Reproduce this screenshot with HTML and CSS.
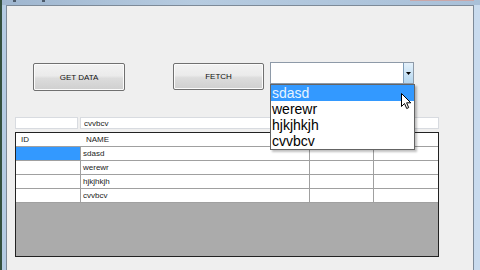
FILE: index.html
```html
<!DOCTYPE html>
<html lang="en">
<head>
    <meta charset="UTF-8">
    <title>Form1</title>
    <link rel="stylesheet" href="styles.css">
</head>
<body>
    <div class="window">
        <div class="titlebar">
            <span class="tb-mark"></span>
            <span class="tb-mark tb-mark2"></span>
            <span class="tb-close"></span>
        </div>
        <div class="frame">
            <div class="client">
                <div class="toolbar">
                    <button class="btn btn-get">GET DATA</button>
                    <button class="btn btn-fetch">FETCH</button>
                    <div class="combo">
                        <div class="combo-box">
                            <span class="combo-text"></span>
                            <span class="combo-arrow">
                                <svg width="5" height="3" viewBox="0 0 5 3"><path d="M0 0h5L2.5 3z" fill="#000"/></svg>
                            </span>
                        </div>
                        <ul class="combo-list">
                            <li class="selected">sdasd</li>
                            <li>werewr</li>
                            <li>hjkjhkjh</li>
                            <li>cvvbcv</li>
                        </ul>
                        <svg class="cursor" width="11" height="17" viewBox="0 0 11 17">
                            <path d="M0.5 0.5v13l3-3 2.2 5 2-0.9-2.1-4.8h4.2z" fill="#fff" stroke="#000" stroke-width="1" stroke-linejoin="round"/>
                        </svg>
                    </div>
                </div>
                <div class="inputs">
                    <input class="txt txt-id" type="text" value="">
                    <input class="txt txt-name" type="text" value="cvvbcv">
                </div>
                <div class="grid">
                    <div class="grid-row grid-head">
                        <span class="cell c-id">ID</span>
                        <span class="cell c-name">NAME</span>
                        <span class="cell c-x"></span>
                        <span class="cell c-y"></span>
                    </div>
                    <div class="grid-row">
                        <span class="cell c-id current"></span>
                        <span class="cell c-name">sdasd</span>
                        <span class="cell c-x"></span>
                        <span class="cell c-y"></span>
                    </div>
                    <div class="grid-row">
                        <span class="cell c-id"></span>
                        <span class="cell c-name">werewr</span>
                        <span class="cell c-x"></span>
                        <span class="cell c-y"></span>
                    </div>
                    <div class="grid-row">
                        <span class="cell c-id"></span>
                        <span class="cell c-name">hjkjhkjh</span>
                        <span class="cell c-x"></span>
                        <span class="cell c-y"></span>
                    </div>
                    <div class="grid-row">
                        <span class="cell c-id"></span>
                        <span class="cell c-name">cvvbcv</span>
                        <span class="cell c-x"></span>
                        <span class="cell c-y"></span>
                    </div>
                </div>
            </div>
        </div>
    </div>
</body>
</html>
```

FILE: styles.css
```css
body {
    margin: 0;
    width: 480px;
    height: 270px;
    overflow: hidden;
    font-family: "Liberation Sans", Arial, sans-serif;
}

.window {
    display: flex;
    flex-direction: column;
    width: 480px;
    height: 270px;
    border-left: 2px solid #34503f;
    box-sizing: border-box;
}

.titlebar {
    position: relative;
    height: 5px;
    background: linear-gradient(to right, #9fb6cf, #b6cbe0 40%, #a9c0d8);
}

.tb-mark {
    position: absolute;
    left: 11px;
    top: 0;
    width: 3px;
    height: 2px;
    background: #4d5b6b;
}

.tb-mark2 {
    left: 40px;
}

.tb-close {
    position: absolute;
    right: 6px;
    top: 0;
    width: 64px;
    height: 1px;
    background: #c9a7a9;
}

.frame {
    flex: 1;
    display: flex;
    padding: 0 6px 0 4px;
    background: linear-gradient(to right, #b4cbe3, #c9dbee);
}

.client {
    flex: 1;
    display: flex;
    flex-direction: column;
    padding: 0 0 0 8px;
    background: #efefef;
    border: 1px solid #7d8a98;
    border-bottom: 0;
}

.toolbar {
    display: flex;
    align-items: flex-start;
    margin-top: 56px;
    padding-left: 18px;
    height: 29px;
}

.btn {
    margin: 1px 0 0 0;
    padding: 0;
    font-family: "Liberation Sans", Arial, sans-serif;
    font-size: 8px;
    color: #111;
    border: 1px solid #707070;
    border-radius: 2px;
    background: linear-gradient(to bottom, #f2f2f2 0%, #ebebeb 45%, #dcdcdc 55%, #cfcfcf 100%);
    box-shadow: inset 0 0 0 1px #fbfbfb;
}

.btn-get {
    width: 92px;
    height: 28px;
}

.btn-fetch {
    width: 91px;
    height: 27px;
    margin-left: 48px;
}

.combo {
    position: relative;
    margin-left: 6px;
    width: 144px;
}

.combo-box {
    display: flex;
    height: 22px;
    box-sizing: border-box;
    border: 1px solid #8e9aa8;
    background: #fff;
}

.combo-text {
    flex: 1;
}

.combo-arrow {
    display: flex;
    align-items: center;
    justify-content: center;
    width: 9px;
    border-left: 1px solid #7f9db9;
    background: linear-gradient(to bottom, #e4f1fb, #b4d6ef);
}

.combo-list {
    position: absolute;
    z-index: 5;
    left: 0;
    top: 22px;
    width: 145px;
    margin: 0;
    padding: 0;
    list-style: none;
    background: #fff;
    border: 1px solid #646464;
    box-sizing: border-box;
    box-shadow: 2px 2px 2px rgba(0, 0, 0, 0.25);
}

.combo-list li {
    height: 16px;
    line-height: 16px;
    padding-left: 1px;
    font-size: 14px;
    color: #000;
}

.combo-list li.selected {
    background: #3399ff;
    color: #e6f4ff;
}

.cursor {
    position: absolute;
    z-index: 6;
    left: 131px;
    top: 31px;
}

.inputs {
    display: flex;
    gap: 2px;
    margin-top: 26px;
}

.txt {
    margin: 0;
    padding: 0 3px;
    height: 12px;
    box-sizing: border-box;
    border: 1px solid #d8dbe0;
    background: #fff;
    font-family: "Liberation Sans", Arial, sans-serif;
    font-size: 8px;
    color: #222;
    outline: none;
}

.txt-id {
    width: 63px;
}

.txt-name {
    width: 359px;
}

.grid {
    margin-top: 3px;
    width: 424px;
    height: 125px;
    box-sizing: border-box;
    border: 1px solid #222;
    background: #ababab;
    font-size: 8px;
    color: #222;
}

.grid-row {
    display: flex;
    height: 14px;
    border-bottom: 1px solid #a0a0a0;
    box-sizing: border-box;
    background: #fff;
}

.cell {
    display: flex;
    align-items: center;
    box-sizing: border-box;
    height: 13px;
    padding-left: 2px;
    border-right: 1px solid #a0a0a0;
    white-space: nowrap;
    overflow: hidden;
}

.c-id {
    width: 65px;
}

.c-name {
    width: 229px;
}

.c-x {
    width: 64px;
}

.c-y {
    flex: 1;
    border-right: 0;
}

.grid-head .cell {
    padding-left: 5px;
    border-right-color: #fff;
}

.grid-head .c-id {
    padding-left: 5px;
}

.grid-head .c-name {
    padding-left: 5px;
}

.cell.current {
    background: #3399ff;
}
```
